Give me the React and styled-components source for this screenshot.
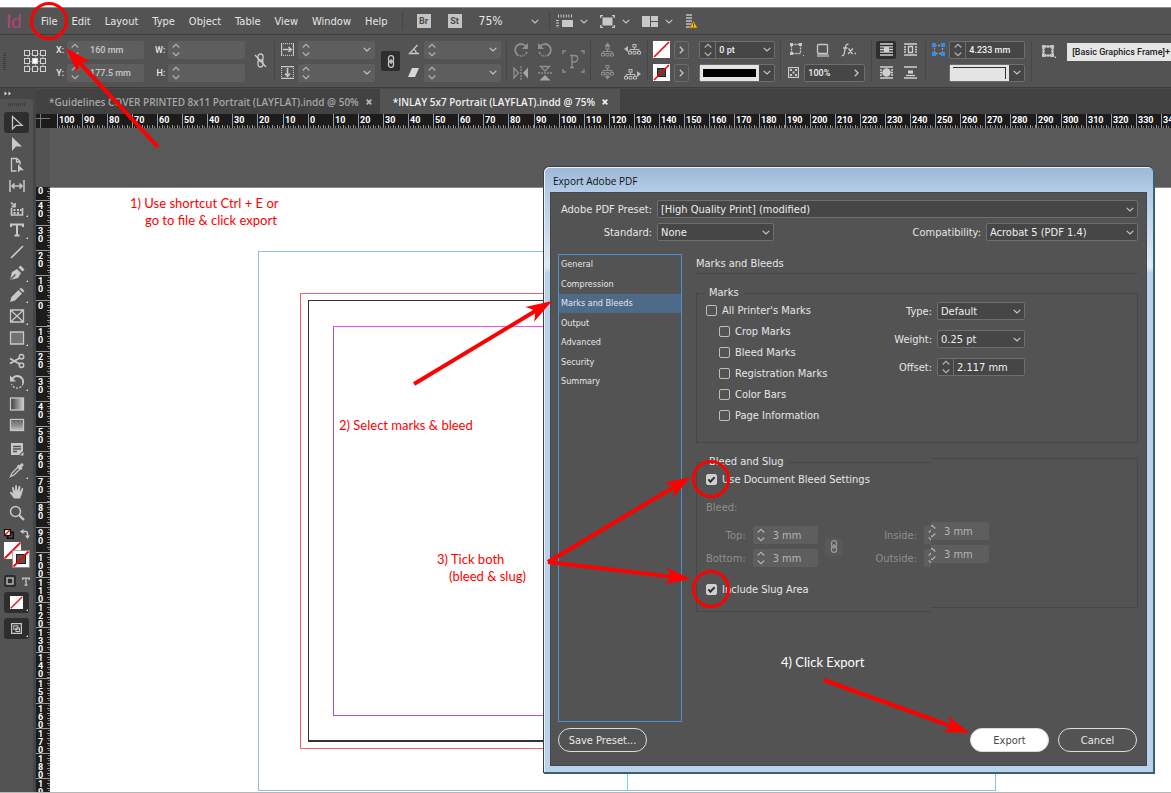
import React from 'react';
import styled, { createGlobalStyle, css } from 'styled-components';

const UI = '"DejaVu Sans Condensed", "DejaVu Sans", sans-serif';
const SMALL = 'Roboto, "Noto Sans", sans-serif';

const GlobalStyle = createGlobalStyle`
  *, *::before, *::after { box-sizing: border-box; }
  body { margin: 0; background: #fff; font-family: ${UI}; font-size: 11px; color: #e6e6e6; }
  button, input, select { font: inherit; color: inherit; margin: 0; }
  svg { display: block; flex: none; }
  p, h2, ul, fieldset, legend { margin: 0; padding: 0; }
`;

/* ---------- shared drawings ---------- */

const Svg = ({ w = 16, h = 16, vb, children, ...rest }) => (
  <svg
    width={w}
    height={h}
    viewBox={vb || `0 0 ${w} ${h}`}
    fill="none"
    stroke="#c8c8c8"
    strokeWidth="1.3"
    aria-hidden="true"
    {...rest}
  >
    {children}
  </svg>
);

const ChevronDown = () => (
  <Svg w={8} h={5} strokeWidth="1.1"><path d="M.7 .8L4 4L7.3 .8" /></Svg>
);
const ChevronRight = () => (
  <Svg w={5} h={8}><path d="M.8 .8L4 4L.8 7.2" /></Svg>
);
const Spinner = () => (
  <Svg w={8} h={14} strokeWidth="1.1"><path d="M.7 4.5L4 1.3L7.3 4.5M.7 9.5L4 12.7L7.3 9.5" stroke="#b4b4b4" /></Svg>
);
const ChainLink = ({ color = '#c8c8c8' }) => (
  <Svg w={8} h={13} stroke={color}>
    <rect x="1.5" y=".7" width="5" height="6.4" rx="2.3" />
    <rect x="1.5" y="5.9" width="5" height="6.4" rx="2.3" />
    <path d="M4 4v5" />
  </Svg>
);

/* ---------- page ---------- */

const Page = styled.div`
  position: relative;
  display: flex;
  flex-direction: column;
  min-height: 100vh;
  overflow: hidden;
  border-bottom: 1px solid #b5b5b5;
`;

const TopStrip = styled.div`
  height: 8px;
  flex: none;
  background: #fff;
  border-bottom: 1px solid #8c8c8c;
`;

const MenuBar = styled.nav`
  display: flex;
  align-items: center;
  height: 27px;
  flex: none;
  padding-left: 6px;
  background: #535353;
  border-bottom: 1px solid #3f3f3f;
`;

const Logo = styled.span`
  width: 35px;
  font: 400 19px/20px Lato, sans-serif;
  color: #b3437c;
`;

const MenuItems = styled.div`
  display: flex;
  gap: 14px;
`;

const PlainButton = styled.button`
  display: flex;
  align-items: center;
  gap: 7px;
  padding: 0;
  border: 0;
  background: none;
  white-space: nowrap;
`;

const Separator = styled.span`
  width: 1px;
  height: ${(p) => p.$h || 18}px;
  flex: none;
  margin: 0 ${(p) => p.$r || 6}px 0 ${(p) => p.$l || 6}px;
  background: #464646;
`;

const AppBadge = styled.button`
  width: 14px;
  height: 14px;
  margin-right: 17px;
  padding: 0;
  border: 0;
  background: #c4c4c4;
  color: #4a4a4a;
  font: 700 9px/14px ${SMALL};
`;

const ZoomBox = styled(PlainButton)`
  width: 60px;
  justify-content: space-between;
  font-size: 12px;
`;

const ViewTools = styled.div`
  display: flex;
  align-items: center;
  gap: 12px;
`;

function TopMenu() {
  return (
    <MenuBar>
      <Logo>Id</Logo>
      <MenuItems>
        {['File', 'Edit', 'Layout', 'Type', 'Object', 'Table', 'View', 'Window', 'Help'].map((m) => (
          <PlainButton key={m}>{m}</PlainButton>
        ))}
      </MenuItems>
      <Separator $l={14} $r={14} />
      <AppBadge>Br</AppBadge>
      <AppBadge>St</AppBadge>
      <ZoomBox aria-label="Zoom level">75% <ChevronDown /></ZoomBox>
      <Separator $l={10} $r={6} />
      <ViewTools>
        <PlainButton aria-label="View options">
          <Svg w={17} h={14}>
            <path d="M2 2h14" strokeWidth="3" strokeDasharray="1 1.6" />
            <path d="M1.5 6v8" strokeWidth="3" strokeDasharray="1 1.6" />
            <rect x="6" y="6" width="11" height="7" fill="#c8c8c8" stroke="none" />
          </Svg>
          <ChevronDown />
        </PlainButton>
        <PlainButton aria-label="Screen mode">
          <Svg w={15} h={13}>
            <rect x="2.5" y="2.5" width="10" height="8" fill="#c8c8c8" stroke="none" />
            <path d="M.7 3V.7H3M12 .7h2.3V3M14.3 10v2.3H12M3 12.3H.7V10" />
          </Svg>
          <ChevronDown />
        </PlainButton>
        <PlainButton aria-label="Arrange documents">
          <Svg w={16} h={11}>
            <path d="M0 0h8v11H0zM9 0h7v5H9zM9 6h7v5H9z" fill="#c8c8c8" stroke="none" />
          </Svg>
          <ChevronDown />
        </PlainButton>
        <PlainButton aria-label="Performance warning">
          <Svg w={13} h={16}>
            <path d="M4 1v15" stroke="#a5a5a5" strokeWidth="6" strokeDasharray="2 1" />
            <path d="M8.5 8L12.5 15H4.5z" fill="#f2c015" stroke="#7a5b00" strokeWidth=".6" />
            <path d="M8.5 10.3v2.4M8.5 13.3v.9" stroke="#333" strokeWidth="1" />
          </Svg>
        </PlainButton>
      </ViewTools>
    </MenuBar>
  );
}

/* ---------- control bar ---------- */

const ControlBar = styled.div`
  display: flex;
  align-items: center;
  height: 53px;
  flex: none;
  overflow: hidden;
  background: #535353;
  border-bottom: 1px solid #3c3c3c;
  font: 500 9px/12px ${SMALL};
`;

const Stack = styled.div`
  display: flex;
  flex-direction: column;
  gap: 5px;
  flex: none;
  margin-left: ${(p) => p.$l || 0}px;
`;

const Row = styled.div`
  display: flex;
  align-items: center;
  gap: ${(p) => p.$gap || 4}px;
  height: 18px;
`;

const FieldLabel = styled.label`
  display: flex;
  align-items: center;
  justify-content: flex-end;
  gap: 3px;
  height: 18px;
`;

const Field = styled.span`
  display: flex;
  align-items: center;
  gap: 4px;
  width: 77px;
  height: 18px;
  padding: 0 4px;
  border-radius: 2px;
  background: #5e5e5e;
  input {
    flex: 1;
    min-width: 0;
    padding: 0 0 0 7px;
    border: 0;
    outline: 0;
    background: none;
    color: #c9c9c9;
  }
`;

const Combo = styled.span`
  display: flex;
  width: ${(p) => p.$w || 76}px;
  height: 18px;
  border: 1px solid #6e6e6e;
  border-radius: 2px;
  background: #464646;
  > * + * { border-left: 1px solid #6e6e6e; }
  input {
    flex: 1;
    min-width: 0;
    padding: 0 0 0 3px;
    border-width: 0;
    outline: 0;
    background: none;
    color: #f0f0f0;
  }
  input:not(:first-child) { border-left-width: 1px; }
`;

const ComboPart = styled.button`
  display: flex;
  align-items: center;
  justify-content: center;
  width: ${(p) => p.$w || 15}px;
  padding: 0;
  border: 0;
  background: none;
`;

const Preview = styled.span`
  display: flex;
  align-items: center;
  flex: 1;
  padding: 2px 3px;
  background: #e4e4e4;
`;

const StrokeSample = styled.span`
  flex: 1;
  height: 8px;
  background: #000;
`;

const CornerSample = styled.span`
  flex: 1;
  align-self: stretch;
  border-top: 1px solid #333;
  border-right: 1px solid #333;
`;

const IconButton = styled.button`
  display: flex;
  align-items: center;
  justify-content: center;
  width: ${(p) => p.$w || 18}px;
  height: ${(p) => p.$h || 18}px;
  padding: 0;
  border: 0;
  border-radius: 2px;
  background: ${(p) => (p.$on ? '#2e2e2e' : 'transparent')};
`;

const ArrowButton = styled(IconButton)`
  border: 1px solid #6a6a6a;
`;

const StyleBox = styled.button`
  height: 18px;
  flex: 1 0 105px;
  margin: 0 0 19px 11px;
  padding: 0 0 0 5px;
  border: 0;
  background: #e6e6e6;
  color: #222;
  text-align: left;
  white-space: nowrap;
`;

const RaisedSlot = styled.span`
  margin: 0 0 19px 6px;
`;

const Grip = styled.span`
  width: ${(p) => (p.$wide ? 17 : 3)}px;
  height: ${(p) => (p.$wide ? 3 : 17)}px;
  flex: none;
  background: repeating-linear-gradient(${(p) => (p.$wide ? '90deg' : '180deg')}, #3c3c3c 0 1px, transparent 1px 2px);
`;

const NumberField = ({ label, value = '', drop }) => (
  <Field>
    <Spinner />
    <input aria-label={label} defaultValue={value} />
    {drop && <ChevronDown />}
  </Field>
);

const NoneSwatch = ({ stroke, size = 17 }) => (
  <Svg w={size} h={size} vb="0 0 17 17">
    <rect width="17" height="17" fill="#fff" stroke="none" />
    {stroke && <rect x="4.5" y="4.5" width="8" height="8" fill="#4a4a4a" stroke="#222" strokeWidth="1" />}
    <path d="M1 16L16 1" stroke="#f00" strokeWidth="1.6" />
  </Svg>
);

const Tree = ({ up, side }) => (
  <Svg w={17} h={15} stroke={side ? '#bdbdbd' : '#8f8f8f'}>
    {!side && (up
      ? <path d="M8.5 .5L11.5 4h-6z" fill="#8f8f8f" stroke="none" />
      : <path d="M8.5 14.5L11.5 11h-6z" fill="#8f8f8f" stroke="none" />)}
    {side && (up
      ? <path d="M0 7L4 4v6z" fill="#bdbdbd" stroke="none" />
      : <path d="M17 9L13 6v6z" fill="#bdbdbd" stroke="none" />)}
    <g transform={side ? (up ? 'translate(2 -1)' : 'translate(-2 1)') : up ? 'translate(0 1)' : 'translate(0 -3)'}>
      <rect x="7" y="3.5" width="3" height="2.6" strokeWidth="1" />
      <path d="M8.5 6v3M4 10.500V8.500h9v2" strokeWidth="1" />
      <path d="M2.500 10.500h3v2.500h-3zM7 10.500h3v2.500H7zM11.500 10.500h3v2.500h-3z" strokeWidth="1" />
    </g>
  </Svg>
);

const WrapIcon = ({ children }) => (
  <Svg w={13} h={13} stroke="#d0d0d0">
    <path d="M0 1h13M0 12h13" />
    {children}
  </Svg>
);

function Controls() {
  return (
    <ControlBar>
      <Stack $l={3}><Grip /></Stack>
      <Stack $l={18}>
        <Svg w={23} h={23} strokeWidth="1">
          <path d="M4 4h15v15H4zM11.500 4v15M4 11.500h15" stroke="#9a9a9a" />
          {[0, 1, 2].map((r) => [0, 1, 2].map((c) => (
            <rect
              key={`${r}${c}`}
              x={0.5 + c * 8}
              y={0.5 + r * 8}
              width="5"
              height="5"
              fill={r === 1 && c === 1 ? '#fff' : '#535353'}
              stroke="#d2d2d2"
            />
          )))}
        </Svg>
      </Stack>
      <Stack $l={9}>
        <FieldLabel>X: <NumberField label="X" value="160 mm" /></FieldLabel>
        <FieldLabel>Y: <NumberField label="Y" value="177.5 mm" /></FieldLabel>
      </Stack>
      <Stack $l={11}>
        <FieldLabel>W: <NumberField label="W" /></FieldLabel>
        <FieldLabel>H: <NumberField label="H" /></FieldLabel>
      </Stack>
      <Stack $l={9}>
        <Svg w={13} h={16}>
          <rect x="4" y="1" width="5" height="7" rx="2.400" />
          <rect x="4" y="7" width="5" height="7" rx="2.400" />
          <path d="M1 2l11 12" />
        </Svg>
      </Stack>
      <Separator $h={40} $l={7} />
      <Stack>
        <Row>
          <Svg w={13} h={13}><path d="M.5 0v13M12.500 0v13" /><path d="M0 .5h13M0 12.500h13" strokeDasharray="1 1" /><path d="M2 6.500h8M7.500 4l2.800 2.500L7.500 9" strokeWidth="1.600" /></Svg>
          <NumberField label="Scale X" drop />
        </Row>
        <Row>
          <Svg w={13} h={13}><path d="M0 .5h13M0 12.500h13" /><path d="M.5 0v13M12.500 0v13" strokeDasharray="1 1" /><path d="M6.500 2v8M4 7.500l2.500 2.800L9 7.500" strokeWidth="1.600" /></Svg>
          <NumberField label="Scale Y" drop />
        </Row>
      </Stack>
      <Stack $l={6}><IconButton $on $w={19} $h={20} aria-label="Constrain scale"><ChainLink /></IconButton></Stack>
      <Stack $l={8}>
        <Row $gap={5}>
          <Svg w={11} h={11}><path d="M9.500 1L1.500 9.500H11M6 5.500q2.500 1 2 4" /></Svg>
          <NumberField label="Rotation" drop />
        </Row>
        <Row $gap={5}>
          <Svg w={11} h={11}><path d="M4 1h7L7 10H0z" fill="#d8d8d8" stroke="none" /></Svg>
          <NumberField label="Shear" drop />
        </Row>
      </Stack>
      <Separator $h={40} $l={5} />
      <Stack>
        <Row $gap={8}>
          <Svg stroke="#8f8f8f"><path d="M13 4.500A6 6 0 1 0 13.800 10" strokeWidth="1.800" strokeDasharray="22 1 1 1 1 1 1 1" /><path d="M15 1v6H9z" fill="#8f8f8f" stroke="none" /></Svg>
          <Svg stroke="#8f8f8f"><path d="M3 4.500A6 6 0 1 1 2.200 10" strokeWidth="1.800" strokeDasharray="22 1 1 1 1 1 1 1" /><path d="M1 1v6h6z" fill="#8f8f8f" stroke="none" /></Svg>
        </Row>
        <Row $gap={8}>
          <Svg stroke="#8f8f8f"><path d="M1 3v10l4.500-5z" /><path d="M8 1v14" strokeDasharray="2 1" /><path d="M15 2.500v11L10 8z" fill="#a6a6a6" stroke="none" /></Svg>
          <Svg stroke="#8f8f8f"><path d="M3.500 1.500h9L8 6z" /><path d="M1 8h14" strokeDasharray="2 1" /><path d="M2.500 15.500h11L8 10z" fill="#a6a6a6" stroke="none" /></Svg>
        </Row>
      </Stack>
      <Stack $l={9}>
        <Svg w={23} h={23} stroke="#8f8f8f">
          <path d="M1 4V1h3M19 1h3v3M22 19v3h-3M4 22H1v-3" />
          <path d="M8 17.500h4M10 17.500V5.500M8 5.500h4.500a3.200 3.200 0 0 1 0 6.500H10" />
        </Svg>
      </Stack>
      <Separator $h={40} $r={8} $l={5} />
      <Stack>
        <Row $gap={8}><Tree up /><Tree up side /></Row>
        <Row $gap={8}><Tree /><Tree side /></Row>
      </Stack>
      <Separator $h={40} $r={5} />
      <Stack>
        <Row><NoneSwatch /><ArrowButton $w={15} aria-label="Fill options"><ChevronRight /></ArrowButton></Row>
        <Row><NoneSwatch stroke /><ArrowButton $w={15} aria-label="Stroke options"><ChevronRight /></ArrowButton></Row>
      </Stack>
      <Stack $l={10}>
        <Combo>
          <ComboPart aria-label="Step weight"><Spinner /></ComboPart>
          <input aria-label="Stroke weight" defaultValue="0 pt" />
          <ComboPart aria-label="Weights"><ChevronDown /></ComboPart>
        </Combo>
        <Combo>
          <Preview><StrokeSample /></Preview>
          <ComboPart aria-label="Stroke type"><ChevronDown /></ComboPart>
        </Combo>
      </Stack>
      <Separator $h={40} $l={5} $r={7} />
      <Stack>
        <Row $gap={8}>
          <IconButton aria-label="Frame"><Svg w={14} h={13}><path d="M1.500 1.500h9v9h-9z" strokeDasharray="2 1" /><path d="M0 0h3v3H0zM9 0h3v3H9zM0 9h3v3H0zM13 12h1.500v1H13z" fill="#c8c8c8" stroke="none" /></Svg></IconButton>
          <IconButton aria-label="Drop shadow"><Svg w={14} h={14}><path d="M1 12.500h12" stroke="#999" strokeWidth="3" /><rect x="1.500" y="1.500" width="10" height="9" rx="1" fill="#535353" /></Svg></IconButton>
          <IconButton aria-label="Effects"><Svg w={16} h={14}><path d="M7.500 1.500Q5 .5 4.500 4L3.300 10Q3 13 .8 12.500M2 5h4.500M7.500 5.500l4 5.500M12 5.500L7 11M13.500 10.500h1.500" /></Svg></IconButton>
        </Row>
        <Row $gap={5}>
          <Svg w={11} h={11}><rect x=".5" y=".5" width="10" height="10" /><path d="M2 2h2v2H2zM7 2h2v2H7zM4.500 4.500h2v2h-2zM2 7h2v2H2zM7 7h2v2H7z" fill="#c8c8c8" stroke="none" /></Svg>
          <Combo $w={61}>
            <input aria-label="Opacity" defaultValue="100%" />
            <ComboPart aria-label="Opacity options"><ChevronRight /></ComboPart>
          </Combo>
        </Row>
      </Stack>
      <Separator $h={40} $r={4} />
      <Stack>
        <Row $gap={5}>
          <IconButton $on $w={20} aria-label="No text wrap"><WrapIcon><path d="M0 3.800h13M0 6.500h13M0 9.200h13" /><path d="M4 6.500h5" strokeWidth="5" /></WrapIcon></IconButton>
          <IconButton aria-label="Wrap bounding box"><WrapIcon><path d="M0 4h2M0 6.500h2M0 9h2M11 4h2M11 6.500h2M11 9h2M4.500 3.500h4v6h-4z" /></WrapIcon></IconButton>
        </Row>
        <Row $gap={5}>
          <IconButton $w={20} aria-label="Wrap object shape"><WrapIcon><path d="M0 4h2M0 6.500h2M0 9h2M11 4h2M11 6.500h2M11 9h2" /><circle cx="6.500" cy="6.500" r="3.600" fill="#d0d0d0" /></WrapIcon></IconButton>
          <IconButton aria-label="Jump object"><WrapIcon><path d="M4 4.500h5v3H4z" fill="#d0d0d0" stroke="none" /><path d="M2 9.500h9" /></WrapIcon></IconButton>
        </Row>
      </Stack>
      <Separator $h={40} />
      <Stack>
        <Row $gap={4}>
          <Svg w={13} h={13} stroke="#a0a0a0"><path d="M2.500 2.500h8v8h-8z" strokeDasharray="2 1.500" /><path d="M0 0h4v4H0zM9 0h4v4H9zM0 9h4v4H0zM9 9h4v4H9z" fill="#2f8ff0" stroke="none" /></Svg>
          <Combo>
            <ComboPart aria-label="Step corner size"><Spinner /></ComboPart>
            <input aria-label="Corner size" defaultValue="4.233 mm" />
          </Combo>
        </Row>
        <FieldLabel as="div">
          <Combo>
            <Preview><CornerSample /></Preview>
            <ComboPart aria-label="Corner shape"><ChevronDown /></ComboPart>
          </Combo>
        </FieldLabel>
      </Stack>
      <Separator $h={40} $l={6} $r={4} />
      <RaisedSlot>
        <Svg w={14} h={13}>
          <path d="M1.500 1.500h9v9h-9z" />
          <path d="M1.500 0v12M10.500 0v12M0 1.500h12M0 10.500h12" strokeWidth="2.600" strokeDasharray="1.600 1" />
          <path d="M12.600 11.500h1.400v1.400h-1.400z" fill="#c8c8c8" stroke="none" />
        </Svg>
      </RaisedSlot>
      <StyleBox>[Basic Graphics Frame]+</StyleBox>
    </ControlBar>
  );
}

/* ---------- tool panel ---------- */

const Main = styled.main`
  display: flex;
  flex: 1;
  background: #424242;
`;

const ToolPanel = styled.aside`
  display: flex;
  flex-direction: column;
  align-items: center;
  width: 36px;
  flex: none;
  background: #535353;
  border-right: 3px solid #464646;
`;

const PanelHeader = styled.div`
  display: flex;
  align-items: center;
  align-self: stretch;
  height: 11px;
  margin-bottom: 4px;
  padding-left: 4px;
  background: #464646;
`;

const ToolGroup = styled.div`
  display: flex;
  flex-direction: column;
  margin-bottom: 2px;
`;

const Tool = styled.button`
  display: flex;
  align-items: center;
  justify-content: center;
  position: relative;
  width: 25px;
  height: 21px;
  padding: 0;
  border: 0;
  border-radius: 3px;
  background: ${(p) => (p.$on ? '#2e2e2e' : 'transparent')};
  ${(p) => !p.$tight && css`&:nth-child(even) { height: 22px; }`}
  ${(p) => p.$more && css`
    &::after {
      content: '';
      position: absolute;
      right: 1px;
      bottom: 2px;
      border: 1px solid transparent;
      border-right-color: #ddd;
      border-bottom-color: #ddd;
    }
  `}
`;

const ToolRow = styled.div`
  display: flex;
  align-items: center;
  justify-content: space-between;
  width: 26px;
  height: ${(p) => p.$h}px;
  margin-bottom: ${(p) => p.$mb || 0}px;
`;

const L = '#c8c8c8';
const solid = { fill: L, stroke: 'none' };

const TOOLS = [
  [
    ['Selection', <path d="M3.500 1.500v12.500l3.800-3.600h5.700z" />],
    ['Direct selection', <path d="M3 1v14l4-4.500h6z" {...solid} />],
    ['Page', <g><path d="M7.500 14H2.500V1.500h5.500l3 3V8M7.500 1.500V5H11" /><path d="M9 7.500v8l2.200-2.300H15z" {...solid} /></g>],
    ['Gap', <path d="M1 2v12M15 2v12M3 8h10M5.500 5.500L3 8l2.500 2.500M10.500 5.500L13 8l-2.500 2.500" strokeWidth="1.500" />],
  ],
  [
    ['Content collector', <g><path d="M2.500 7v7h11V7M2 1.500l4 4M6 2v3.700H2.500" strokeWidth="1.600" /><path d="M4.500 8h2v2h-2zM8 8h2v2H8zM11 8h1.500v2H11zM4.500 11h2v2h-2zM8 11h2v2H8z" {...solid} /></g>, 1],
    ['Type', <path d="M2 5V2.500h12V5M8 2.500v11M5.500 13.500h5" strokeWidth="2" />, 1],
    ['Line', <path d="M2 14L14 2" strokeWidth="1.700" />],
    ['Pen', <g><path d="M1 15l2-8 5-3 4 4-3 5z" {...solid} /><path d="M9.500 2.500L11.500 .5l4 4-2 2z" {...solid} /><path d="M1.500 14.500L6.500 9.500" stroke="#535353" /></g>, 1],
    ['Pencil', <g><path d="M1 15l1.500-5L9.500 3l3.500 3.500-7 7z" {...solid} /><path d="M10.500 2L12 .5l3.500 3.500L14 5.500z" {...solid} /></g>, 1],
    ['Rectangle frame', <path d="M1.500 2h13v12h-13zM1.500 2l13 12M14.500 2l-13 12" />, 1],
    ['Rectangle', <path d="M1.500 2h13v12h-13z" fill="#727272" />, 1],
  ],
  [
    ['Scissors', <g strokeWidth="1.500"><circle cx="12.500" cy="3.800" r="2.200" /><circle cx="12.500" cy="12.200" r="2.200" /><path d="M10.700 5L1 10.500M10.700 11L1 5.500" strokeWidth="1.900" /></g>],
    ['Free transform', <g><path d="M3 5A6 6 0 0 1 14 9.500" strokeWidth="2" /><path d="M14 9.500A6 6 0 0 1 2.500 10" strokeDasharray="2 1.500" /><path d="M1 1.500v6h6z" {...solid} /></g>, 1],
    ['Gradient swatch', <g><rect x="1.500" y="2" width="13" height="12" fill="url(#gs)" /><defs><linearGradient id="gs"><stop stopColor="#3c3c3c" /><stop offset="1" stopColor="#cfcfcf" /></linearGradient></defs></g>],
    ['Gradient feather', <g><rect x="1.500" y="2.500" width="13" height="11" fill="url(#gf)" /><path d="M2 4h2v2H2zM6 4h2v2H6zM10 4h2v2h-2zM4 6h2v2H4zM8 6h2v2H8zM12 6h2v2h-2z" fill="#8a8a8a" stroke="none" /><defs><linearGradient id="gf" x2="0" y2="1"><stop stopColor="#4a4a4a" /><stop offset="1" stopColor="#c4c4c4" /></linearGradient></defs></g>],
  ],
  [
    ['Note', <g><path d="M2 2h12v8l-4 4H2z" {...solid} /><path d="M4 5.500h8M4 8h8M4 10.500h4" stroke="#535353" /><path d="M11 14.500l3.500-3.500v3.500z" {...solid} /></g>],
    ['Eyedropper', <g><path d="M9 5L3 11l-1.500 3.500L5 13l6-6z" /><path d="M8 4l1.500-1.500 1 1L12 1.500q2.500-1 2.500 2L12.500 5.500l1 1L12 8z" {...solid} /></g>, 1],
    ['Hand', <path d="M5 14.500L1 9q-.5-1.500 1-1.300L4 9.500 3 3.500q.8-1.300 1.600 0L6 7.500 6.200 1.700q.9-1.200 1.700 0L8.300 7.300 9.700 2.200q1-1 1.700.2L10.700 8l2.100-3.800q1.100-.6 1.500.4L12.500 11l-1.500 3.500z" {...solid} />],
    ['Zoom', <g><circle cx="6.500" cy="6.500" r="5" strokeWidth="1.500" /><path d="M10 10l5 5" strokeWidth="2.200" /></g>],
  ],
];

function Tools() {
  return (
    <ToolPanel>
      <PanelHeader><Svg w={8} h={5}><path d="M.5 .5L3 2.500.5 4.500zM4.500 .5L7 2.500 4.500 4.500z" {...solid} fill="#ddd" /></Svg></PanelHeader>
      <Stack><Grip $wide /></Stack>
      <ToolRow $h={6} />
      {TOOLS.map((group, gi) => (
        <ToolGroup key={gi}>
          {group.map(([name, art, more], i) => (
            <Tool key={name} aria-label={name} $tight={gi === 0} $on={gi === 0 && i === 0} $more={more}>
              <Svg>{art}</Svg>
            </Tool>
          ))}
        </ToolGroup>
      ))}
      <ToolRow $h={16}>
        <Svg w={10} h={10}><rect x="3.500" y="3.500" width="6" height="6" stroke="#111" strokeWidth="2" /><rect x=".5" y=".5" width="6" height="6" fill="#fff" stroke="#111" /><path d="M1 6l5-5" stroke="#f00" /></Svg>
        <Svg w={10} h={10}><path d="M3 2.500h2.500q2 0 2 2V7" /><path d="M0 2.500L3.500 0v5zM5 6.500h5L7.500 10z" {...solid} /></Svg>
      </ToolRow>
      <ToolRow $h={26} $mb={7}>
        <Svg w={26} h={26}>
          <rect x="0" y="0" width="17" height="17" fill="#fff" stroke="none" />
          <path d="M.5 16.500L16.500 .5" stroke="#f00" strokeWidth="1.800" />
          <rect x="8.500" y="8.500" width="17" height="17" fill="#fff" stroke="#777" strokeWidth=".6" />
          <rect x="12.500" y="12.500" width="9" height="9" fill="#535353" stroke="#222" strokeWidth="1" />
          <path d="M9.500 24.500L24.500 9.500" stroke="#f00" strokeWidth="1.800" />
        </Svg>
      </ToolRow>
      <ToolRow $h={12} $mb={5}>
        <IconButton $on $w={12} $h={12} aria-label="Formatting affects container"><Svg w={8} h={8}><rect x="1" y="1" width="6" height="6" /></Svg></IconButton>
        <Svg w={8} h={9}><path d="M.7 3V1.200h6.600V3M4 1v7M2.500 8.200h3" /></Svg>
      </ToolRow>
      <ToolGroup>
        <Tool $on $more $tight aria-label="Apply none"><NoneSwatch size={13} /></Tool>
      </ToolGroup>
      <ToolRow $h={3} />
      <Tool $on $more $tight aria-label="Screen mode">
        <Svg w={11} h={11}><rect x=".6" y=".6" width="9.800" height="9.800" /><rect x="2.800" y="2.800" width="4" height="3.500" strokeWidth="1" /><rect x="5" y="5" width="3.500" height="3.500" strokeWidth="1" /></Svg>
      </Tool>
    </ToolPanel>
  );
}

/* ---------- document area ---------- */

const Document = styled.section`
  display: flex;
  flex-direction: column;
  flex: 1;
  min-width: 0;
`;

const TabBar = styled.div`
  display: flex;
  height: 26px;
  flex: none;
  border-top: 1px solid #4a4a4a;
`;

const Tab = styled.button`
  display: flex;
  align-items: center;
  gap: 7px;
  padding: 0 ${(p) => (p.$active ? 12 : 8)}px 0 13px;
  border: 0;
  background: ${(p) => (p.$active ? '#535353' : 'transparent')};
  color: ${(p) => (p.$active ? '#f0f0f0' : '#a6a6a6')};
  font: 600 10px/14px "Open Sans", "Noto Sans", sans-serif;
  white-space: nowrap;
`;

const HRuler = styled.div`
  display: flex;
  height: 14px;
  flex: none;
  overflow: hidden;
  background: #1c1c1c;
`;

const Corner = styled.span`
  width: 21px;
  flex: none;
  background:
    linear-gradient(90deg, transparent 4px, #777 4px 5px, transparent 5px),
    linear-gradient(180deg, transparent 4px, #777 4px 5px, transparent 5px);
  background-size: 14px 14px;
  background-repeat: no-repeat;
`;

const HCell = styled.span`
  width: 25px;
  flex: none;
  padding-left: 1px;
  border-left: 1px solid #9a9a9a;
  background:
    repeating-linear-gradient(90deg, transparent 0 4px, #999 4px 5px) 0 100% / 100% 3px no-repeat,
    repeating-linear-gradient(90deg, transparent 0 1px, #777 1px 2px, transparent 2px 5px) 0 100% / 100% 2px no-repeat;
  color: #fff;
  font: 700 9px/12px ${SMALL};
  &:nth-child(10n) { width: 26px; }
`;

const DocBody = styled.div`
  display: flex;
  flex: 1;
  position: relative;
`;

const VRuler = styled.div`
  width: 14px;
  flex: none;
  align-self: stretch;
  display: flex;
  flex-direction: column;
  overflow: hidden;
  height: 0;
  min-height: 100%;
  background: #1c1c1c;
`;

const RulerGap = styled.span`
  height: 59px;
  flex: none;
  background: #535353;
`;

const VCell = styled.span`
  display: flex;
  flex-direction: column;
  flex: none;
  height: ${(p) => (p.$partial ? 13 : 25)}px;
  padding: ${(p) => (p.$partial ? 0 : 1)}px 0 0 2px;
  border-top: ${(p) => (p.$partial ? 0 : 1)}px solid #9a9a9a;
  background:
    repeating-linear-gradient(180deg, transparent 0 4px, #999 4px 5px) 100% 0 / 3px 100% no-repeat,
    repeating-linear-gradient(180deg, transparent 0 1px, #777 1px 2px, transparent 2px 5px) 100% 0 / 2px 100% no-repeat;
  color: #fff;
  font: 700 9px/8px ${SMALL};
  &:nth-child(7n) { height: 26px; }
`;

const Canvas = styled.div`
  position: relative;
  flex: 1;
  overflow: hidden;
  background: #fff;
`;

const Pasteboard = styled.div`
  height: 60px;
  background: #595959;
  border-bottom: 1px solid #8a8a8a;
`;

const Guide = styled.div`
  position: absolute;
  left: ${(p) => p.$x}px;
  top: ${(p) => p.$y}px;
  width: ${(p) => p.$w}px;
  height: ${(p) => p.$h}px;
  border: 1px solid ${(p) => p.$c};
  ${(p) => p.$page && css`border-bottom-width: 2px;`}
  ${(p) => p.$margin && css`border-left-color: #a64dff; border-bottom-color: #b04fd8;`}
`;

const Spine = styled.div`
  position: absolute;
  left: 577px;
  top: 123px;
  width: 1px;
  height: 539px;
  background: #4ff0f0;
`;

const H_LABELS = Array.from({ length: 45 }, (_, i) => Math.abs(i - 10) * 10);
const V_LABELS = Array.from({ length: 24 }, (_, i) => Math.abs(i - 4) * 10);

function DocumentArea() {
  return (
    <Document>
      <TabBar>
        <Tab>*Guidelines COVER PRINTED 8x11 Portrait (LAYFLAT).indd @ 50% <Svg w={6} h={6}><path d="M.7 .7l4.600 4.600M5.300 .7L.7 5.300" stroke="#b8b8b8" strokeWidth="1.700" /></Svg></Tab>
        <Tab $active>*INLAY 5x7 Portrait (LAYFLAT).indd @ 75% <Svg w={6} h={6}><path d="M.7 .7l4.600 4.600M5.300 .7L.7 5.300" stroke="#f0f0f0" strokeWidth="1.700" /></Svg></Tab>
      </TabBar>
      <HRuler>
        <Corner />
        {H_LABELS.map((n, i) => <HCell key={i}>{n}</HCell>)}
      </HRuler>
      <DocBody>
        <VRuler>
          <RulerGap />
          <VCell $partial>0</VCell>
          {V_LABELS.map((n, i) => (
            <VCell key={i}>{String(n).split('').map((d, k) => <span key={k}>{d}</span>)}</VCell>
          ))}
        </VRuler>
        <Canvas>
          <Pasteboard />
          <Guide $x={208} $y={123} $w={738} $h={540} $c="#8cc0de" />
          <Guide $x={250} $y={165} $w={654} $h={456} $c="#f0606c" />
          <Guide $x={258} $y={172} $w={638} $h={442} $c="#333" $page />
          <Guide $x={283} $y={198} $w={588} $h={390} $c="#ee55ee" $margin />
          <Spine />
        </Canvas>
      </DocBody>
    </Document>
  );
}

/* ---------- export dialog ---------- */

const Dialog = styled.section`
  position: absolute;
  left: 543px;
  top: 166px;
  width: 611px;
  padding: 0 6px 6px;
  border: 1px solid #3b3f45;
  border-right-color: #1f6f80;
  border-bottom-color: #1f6f80;
  border-radius: 6px 6px 0 0;
  background: linear-gradient(180deg, #9cb8d8 0, #b3cbe6 24px, #dfeaf6 100px, #b9d1ea 106px);
  box-shadow: inset 1px 1px 0 #e8f2fb, 1px 1px 0 #555;
`;

const TitleBar = styled.h2`
  height: 25px;
  padding: 2px 0 0 3px;
  color: #111;
  font: 400 10px/25px "Open Sans", "Noto Sans", sans-serif;
`;

const DialogBody = styled.div`
  display: flex;
  flex-direction: column;
  padding: 7px 8px 13px 7px;
  border: 1px solid #44484d;
  background: #535353;
`;

const SettingRow = styled.div`
  display: flex;
  align-items: center;
  gap: 5px;
  height: 18px;
  margin-bottom: ${(p) => p.$mb || 5}px;
`;

const SettingLabel = styled.label`
  width: ${(p) => (p.$w ? `${p.$w}px` : 'auto')};
  margin-left: ${(p) => (p.$push ? 'auto' : 0)};
  text-align: right;
  white-space: nowrap;
`;

const SelectWrap = styled.span`
  display: grid;
  align-items: center;
  width: ${(p) => (p.$w ? `${p.$w}px` : 'auto')};
  flex: ${(p) => (p.$w ? 'none' : 1)};
  select {
    grid-area: 1 / 1;
    width: 100%;
    height: 18px;
    padding: 0 3px;
    border: 1px solid #6e6e6e;
    border-radius: 2px;
    appearance: none;
    background: #464646;
    color: #eee;
  }
  svg {
    grid-area: 1 / 1;
    justify-self: end;
    margin-right: 4px;
    pointer-events: none;
  }
`;

const Select = ({ id, value, w }) => (
  <SelectWrap $w={w}>
    <select id={id} defaultValue={value}><option>{value}</option></select>
    <ChevronDown />
  </SelectWrap>
);

const Columns = styled.div`
  display: flex;
  gap: 14px;
`;

const CategoryList = styled.ul`
  width: 124px;
  height: 468px;
  flex: none;
  border: 1px solid #4b8fd2;
  list-style: none;
`;

const Category = styled.li`
  height: 19px;
  background: ${(p) => (p.$on ? '#4d6a88' : 'transparent')};
  &:nth-child(even) { height: 20px; }
  button {
    width: 100%;
    height: 100%;
    padding: 0 0 1px 2px;
    border: 0;
    background: none;
    font-size: 9px;
    text-align: left;
  }
`;

const Panel = styled.div`
  flex: 1;
`;

const PanelTitle = styled.h2`
  height: 20px;
  margin-bottom: 12px;
  border-bottom: 1px solid #474747;
  font: 400 11px/19px ${UI};
`;

const Legend = styled.legend`
  margin-left: 7px;
  padding: 0 5px;
  line-height: 14px;
`;

const MarksBox = styled.fieldset`
  min-width: 0;
  border: 1px solid #474747;
  height: 157px;
`;

const MarksGrid = styled.div`
  display: grid;
  grid-template-columns: 1fr auto;
  padding: 0 112px 0 9px;
`;

const CheckRow = styled.label`
  display: flex;
  align-items: center;
  gap: 5px;
  height: 21px;
  padding-left: ${(p) => (p.$sub ? 13 : 0)}px;
  white-space: nowrap;
`;

const Box = styled.input.attrs({ type: 'checkbox' })`
  appearance: none;
  display: grid;
  place-items: center;
  width: 11px;
  height: 11px;
  flex: none;
  border: 1px solid #bdbdbd;
  border-radius: 2px;
  &:checked { background: #cfcfcf; border-color: #cfcfcf; }
  &:checked::after {
    content: '';
    width: 7px;
    height: 4px;
    border: solid #333;
    border-width: 0 0 2px 2px;
    transform: translateY(-1px) rotate(-45deg);
  }
`;

const Check = ({ children, sub, on }) => (
  <CheckRow $sub={sub}><Box defaultChecked={on} />{children}</CheckRow>
);

const MarkSettings = styled.div`
  padding-top: 2px;
`;

const OffsetCombo = styled(Combo)`
  width: 88px;
`;

const SlugArea = styled.div`
  display: flex;
  margin-top: 12px;
`;

const SlugMain = styled.fieldset`
  width: 235px;
  height: 157px;
  min-width: 0;
  border: 1px solid #474747;
  border-right: 0;
`;

const SlugSide = styled.div`
  flex: 1;
  height: 150px;
  margin-top: 3px;
  padding-top: 63px;
  border: 1px solid #474747;
  border-left: 0;
`;

const SlugContent = styled.div`
  padding-left: 9px;
`;

const Muted = styled.div`
  height: 18px;
  margin-top: 9px;
  color: #8e8e8e;
  line-height: 18px;
`;

const BleedRows = styled.div`
  display: flex;
  align-items: center;
  justify-content: space-between;
  height: 41px;
  margin: 9px 0 12px;
  color: #8e8e8e;
`;

const BleedColumn = styled.div`
  display: flex;
  flex-direction: column;
  gap: 5px;
`;

const BleedLabel = styled.label`
  display: flex;
  align-items: center;
  justify-content: flex-end;
  gap: 7px;
  height: 18px;
`;

const BleedField = styled.span`
  display: flex;
  align-items: center;
  width: 65px;
  height: 18px;
  padding-left: 4px;
  overflow: hidden;
  border-radius: 2px;
  background: #5e5e5e;
  ${(p) => p.$stub && css`width: 7px; border-radius: 2px 0 0 2px;`}
  ${(p) => p.$cut && css`width: 58px; padding: 0; border-radius: 0 2px 2px 0; svg { margin-left: -3px; }`}
  input {
    width: 50px;
    padding: 0 0 0 8px;
    border: 0;
    background: none;
    color: #b5b5b5;
  }
`;

const LinkButton = styled(IconButton)`
  background: #585858;
  margin-left: -26px;
`;

const DialogFooter = styled.div`
  display: flex;
  gap: 9px;
  margin-top: 6px;
  padding-right: 1px;
`;

const PillButton = styled.button`
  width: ${(p) => p.$w || 79}px;
  height: 24px;
  padding: 0;
  border: 1px solid #dcdcdc;
  border-radius: 12px;
  background: ${(p) => (p.$primary ? '#fff' : '#535353')};
  color: ${(p) => (p.$primary ? '#4a4a4a' : '#e8e8e8')};
  &:first-child { margin-right: auto; }
`;

const MARKS = ['Crop Marks', 'Bleed Marks', 'Registration Marks', 'Color Bars', 'Page Information'];
const CATEGORIES = ['General', 'Compression', 'Marks and Bleeds', 'Output', 'Advanced', 'Security', 'Summary'];

function ExportDialog() {
  return (
    <Dialog role="dialog" aria-labelledby="export-title">
      <TitleBar id="export-title">Export Adobe PDF</TitleBar>
      <DialogBody>
        <SettingRow>
          <SettingLabel $w={94} htmlFor="preset">Adobe PDF Preset:</SettingLabel>
          <Select id="preset" value="[High Quality Print] (modified)" />
        </SettingRow>
        <SettingRow $mb={13}>
          <SettingLabel $w={94} htmlFor="standard">Standard:</SettingLabel>
          <Select id="standard" value="None" w={117} />
          <SettingLabel $push htmlFor="compat">Compatibility:</SettingLabel>
          <Select id="compat" value="Acrobat 5 (PDF 1.4)" w={152} />
        </SettingRow>
        <Columns>
          <CategoryList>
            {CATEGORIES.map((c) => (
              <Category key={c} $on={c === 'Marks and Bleeds'}><button>{c}</button></Category>
            ))}
          </CategoryList>
          <Panel>
            <PanelTitle>Marks and Bleeds</PanelTitle>
            <MarksBox>
              <Legend>Marks</Legend>
              <MarksGrid>
                <div>
                  <Check>All Printer's Marks</Check>
                  {MARKS.map((m) => <Check key={m} sub>{m}</Check>)}
                </div>
                <MarkSettings>
                  <SettingRow $mb={10}>
                    <SettingLabel $push htmlFor="type">Type:</SettingLabel>
                    <Select id="type" value="Default" w={88} />
                  </SettingRow>
                  <SettingRow $mb={10}>
                    <SettingLabel $push htmlFor="weight">Weight:</SettingLabel>
                    <Select id="weight" value="0.25 pt" w={88} />
                  </SettingRow>
                  <SettingRow>
                    <SettingLabel $push htmlFor="offset">Offset:</SettingLabel>
                    <OffsetCombo>
                      <ComboPart aria-label="Step offset"><Spinner /></ComboPart>
                      <input id="offset" defaultValue="2.117 mm" />
                    </OffsetCombo>
                  </SettingRow>
                </MarkSettings>
              </MarksGrid>
            </MarksBox>
            <SlugArea>
              <SlugMain>
                <Legend>Bleed and Slug</Legend>
                <SlugContent>
                  <Check on>Use Document Bleed Settings</Check>
                  <Muted>Bleed:</Muted>
                  <BleedRows>
                    <BleedColumn>
                      <BleedLabel>Top: <BleedField><Spinner /><input defaultValue="3 mm" /></BleedField></BleedLabel>
                      <BleedLabel>Bottom: <BleedField><Spinner /><input defaultValue="3 mm" /></BleedField></BleedLabel>
                    </BleedColumn>
                    <LinkButton aria-label="Make all settings the same"><ChainLink color="#9a9a9a" /></LinkButton>
                    <BleedColumn>
                      <BleedLabel htmlFor="inside">Inside: <BleedField $stub><Spinner /></BleedField></BleedLabel>
                      <BleedLabel htmlFor="outside">Outside: <BleedField $stub><Spinner /></BleedField></BleedLabel>
                    </BleedColumn>
                  </BleedRows>
                  <Check on>Include Slug Area</Check>
                </SlugContent>
              </SlugMain>
              <SlugSide>
                <BleedColumn>
                  <BleedField $cut><Spinner /><input id="inside" defaultValue="3 mm" /></BleedField>
                  <BleedField $cut><Spinner /><input id="outside" defaultValue="3 mm" /></BleedField>
                </BleedColumn>
              </SlugSide>
            </SlugArea>
          </Panel>
        </Columns>
        <DialogFooter>
          <PillButton $w={89}>Save Preset...</PillButton>
          <PillButton $primary>Export</PillButton>
          <PillButton>Cancel</PillButton>
        </DialogFooter>
      </DialogBody>
    </Dialog>
  );
}

/* ---------- instruction layer ---------- */

const Note = styled.p`
  position: absolute;
  left: ${(p) => p.$x}px;
  top: ${(p) => p.$y}px;
  color: ${(p) => (p.$light ? '#fff' : '#f00')};
  font: 400 13px/17px Lato, sans-serif;
  white-space: nowrap;
`;

const NoteLine = styled.span`
  display: block;
  padding-left: ${(p) => p.$indent || 0}px;
`;

const Marks = styled.svg`
  position: absolute;
  inset: 0;
  width: 100%;
  height: 100%;
  pointer-events: none;
`;

const Arrow = ({ from, to }) => {
  const dx = to[0] - from[0];
  const dy = to[1] - from[1];
  const len = Math.hypot(dx, dy);
  const angle = (Math.atan2(dy, dx) * 180) / Math.PI;
  return (
    <g transform={`translate(${from[0]} ${from[1]}) rotate(${angle})`} fill="#f00">
      <rect y="-2" width={len - 18} height="4" />
      <path d={`M${len} 0L${len - 26} -8.500Q${len - 21} -3 ${len - 20} 0Q${len - 21} 3 ${len - 26} 8.500z`} />
    </g>
  );
};

const Ring = ({ x, y }) => <circle cx={x} cy={y} r="17.500" fill="none" stroke="#f00" strokeWidth="3" />;

function Instructions() {
  return (
    <>
      <Note $x={130} $y={195}>
        <NoteLine>1) Use shortcut Ctrl + E or</NoteLine>
        <NoteLine $indent={15}>go to file &amp; click export</NoteLine>
      </Note>
      <Note $x={339} $y={417}>2) Select marks &amp; bleed</Note>
      <Note $x={437} $y={551}>
        <NoteLine>3) Tick both</NoteLine>
        <NoteLine $indent={12}>(bleed &amp; slug)</NoteLine>
      </Note>
      <Note $x={781} $y={654} $light>4) Click Export</Note>
      <Marks aria-hidden="true">
        <Ring x={49} y={21} />
        <Ring x={711} y={479} />
        <Ring x={711} y={589} />
        <Arrow from={[158, 147]} to={[66, 48]} />
        <Arrow from={[414, 384]} to={[552, 301]} />
        <Arrow from={[548, 562]} to={[691, 477]} />
        <Arrow from={[548, 562]} to={[691, 579]} />
        <Arrow from={[824, 680]} to={[970, 733]} />
      </Marks>
    </>
  );
}

export default function App() {
  return (
    <Page>
      <GlobalStyle />
      <TopStrip />
      <TopMenu />
      <Controls />
      <Main>
        <Tools />
        <DocumentArea />
      </Main>
      <ExportDialog />
      <Instructions />
    </Page>
  );
}
